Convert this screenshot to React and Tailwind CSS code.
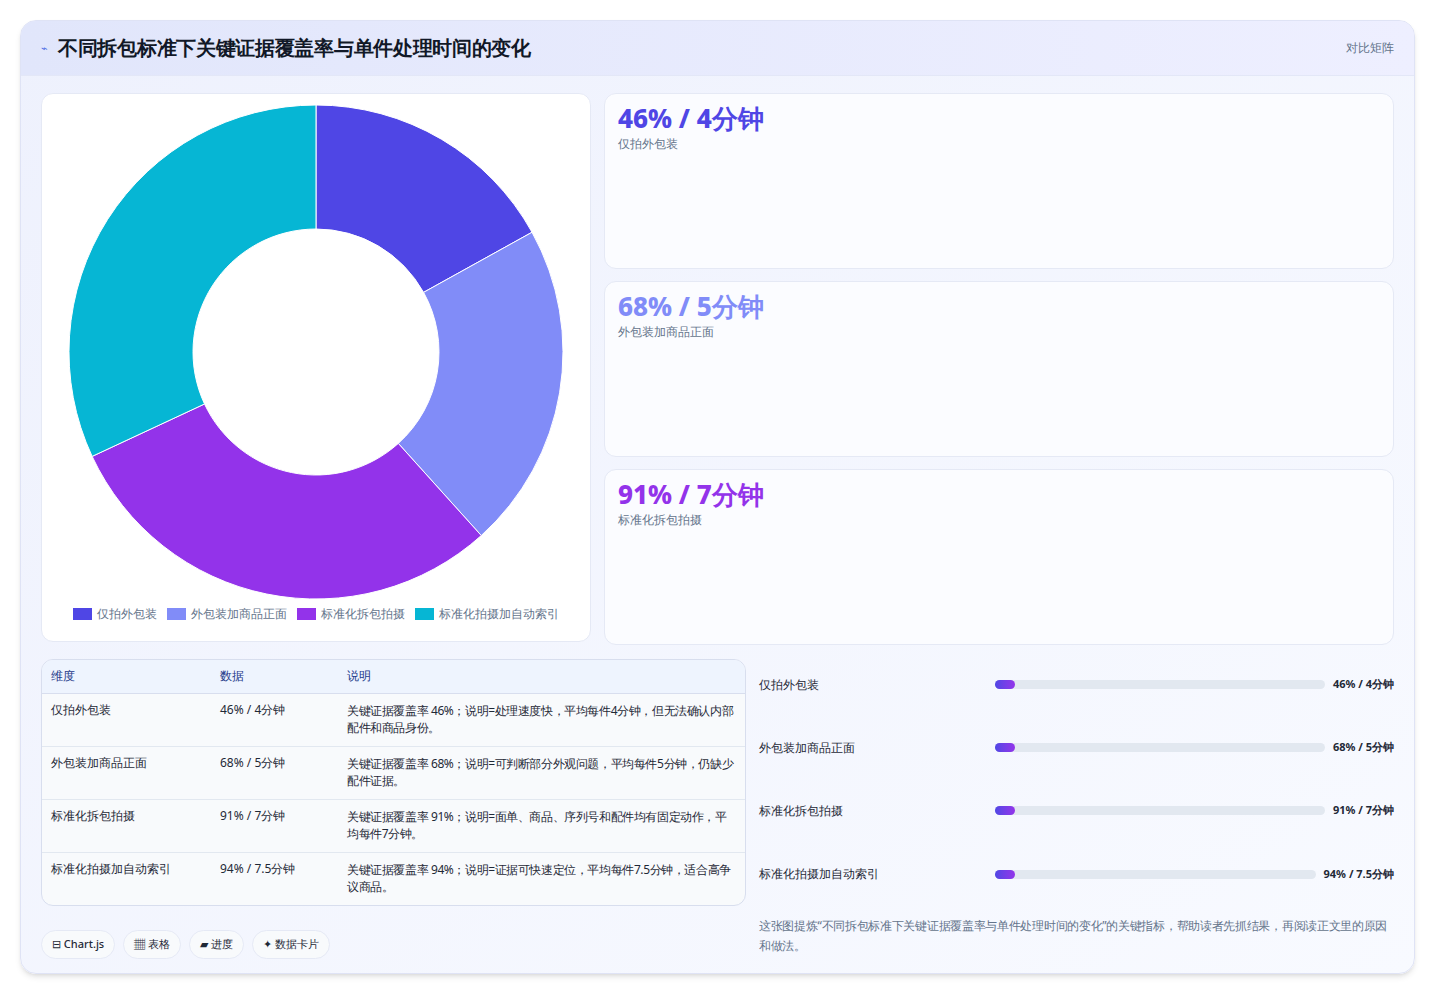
import React from 'react';

const rows = [
  { name: '仅拍外包装', value: '46% / 4分钟', note: '关键证据覆盖率 46%；说明=处理速度快，平均每件4分钟，但无法确认内部配件和商品身份。', color: '#4f46e5', end: 61 },
  { name: '外包装加商品正面', value: '68% / 5分钟', note: '关键证据覆盖率 68%；说明=可判断部分外观问题，平均每件5分钟，仍缺少配件证据。', color: '#818cf8', end: 138 },
  { name: '标准化拆包拍摄', value: '91% / 7分钟', note: '关键证据覆盖率 91%；说明=面单、商品、序列号和配件均有固定动作，平均每件7分钟。', color: '#9333ea', end: 245 },
  { name: '标准化拍摄加自动索引', value: '94% / 7.5分钟', note: '关键证据覆盖率 94%；说明=证据可快速定位，平均每件7.5分钟，适合高争议商品。', color: '#06b6d4', end: 360 },
];

const Donut = () => {
  const cx = 250, cy = 250, R = 247, r = 123;
  let start = 0;
  const pt = (deg, rad) => {
    const a = (deg * Math.PI) / 180;
    return [cx + rad * Math.sin(a), cy - rad * Math.cos(a)];
  };
  return (
    <svg width="500" height="500" viewBox="0 0 500 500">
      {rows.map((row) => {
        const a0 = start;
        const a1 = row.end;
        start = a1;
        const large = a1 - a0 > 180 ? 1 : 0;
        const [x0, y0] = pt(a0, R);
        const [x1, y1] = pt(a1 - 0.001, R);
        const [x2, y2] = pt(a1 - 0.001, r);
        const [x3, y3] = pt(a0, r);
        return (
          <path
            key={row.name}
            d={`M${x0} ${y0} A${R} ${R} 0 ${large} 1 ${x1} ${y1} L${x2} ${y2} A${r} ${r} 0 ${large} 0 ${x3} ${y3} Z`}
            fill={row.color}
            stroke="#fff"
            strokeWidth="1"
          />
        );
      })}
    </svg>
  );
};

const App = () => {
  return (
    <div className="min-h-screen bg-white p-5 font-['Noto_Sans_CJK_SC','Noto_Sans',sans-serif]">
      <div className="rounded-2xl border border-[#dfe3f5] bg-gradient-to-br from-[#eef1fd] to-[#f8faff] shadow-md overflow-hidden">
        {/* header */}
        <div className="flex h-[55px] items-center justify-between border-b border-[#e3e7f7] bg-gradient-to-r from-[#e1e6fb] to-[#eeefff] px-5">
          <div className="flex items-center gap-[10px]">
            <span className="text-[11px] text-[#4f6ee5]">⌁</span>
            <h1 className="text-[20px] font-bold tracking-[-0.3px] text-[#111827]">不同拆包标准下关键证据覆盖率与单件处理时间的变化</h1>
          </div>
          <span className="text-xs text-[#64748b]">对比矩阵</span>
        </div>

        <div className="px-5 pt-[17px] pb-[14px]">
          <div className="flex gap-[13px]">
            <div className="flex h-[549px] w-[550px] shrink-0 flex-col items-center rounded-xl border border-[#e5e9f5] bg-white pt-[8px]">
              <Donut />
              <div className="mt-[4px] flex items-center gap-[10px] text-xs text-[#64748b]">
                {rows.map((r) => (
                  <span key={r.name} className="flex items-center gap-[5px]">
                    <span className="inline-block h-3 w-[19px]" style={{ background: r.color }} />
                    {r.name}
                  </span>
                ))}
              </div>
            </div>
            <div className="flex flex-1 flex-col gap-3">
              {rows.slice(0, 3).map((r) => (
                <div key={r.name} className="h-[176px] rounded-xl border border-[#e5e9f5] bg-[#fbfcff] px-[13px] pt-[6px]">
                  <div className="text-[26px] font-extrabold leading-[36px]" style={{ color: r.color }}>{r.value}</div>
                  <div className="text-xs text-[#64748b]">{r.name}</div>
                </div>
              ))}
            </div>
          </div>

          <div className="mt-[14px] flex gap-[13px]">
            <div className="w-[705px] shrink-0">
              <div className="overflow-hidden rounded-xl border border-[#d8deee] bg-[#f8fafc]">
                <table className="w-full text-left text-xs text-[#1f2937]">
                  <thead>
                    <tr className="h-[33px] border-b border-[#d8deee] bg-[#eef4fe] text-[#1e3a8a]">
                      <th className="w-[178px] pl-[9px] font-medium">维度</th>
                      <th className="w-[127px] font-medium">数据</th>
                      <th className="font-medium">说明</th>
                    </tr>
                  </thead>
                  <tbody>
                    {rows.map((r, i) => (
                      <tr key={r.name} className={`h-[53px] align-top ${i < 3 ? 'border-b border-[#e2e8f0]' : ''}`}>
                        <td className="pl-[9px] pt-[8px]">{r.name}</td>
                        <td className="pt-[8px]">{r.value}</td>
                        <td className="pt-[8px] pb-[6px] pr-[10px] leading-[17px] tracking-[-0.4px]">{r.note}</td>
                      </tr>
                    ))}
                  </tbody>
                </table>
              </div>
              <div className="mt-[24px] flex gap-2 text-[11px] text-[#1f2937]">
                {['⊟ Chart.js', '▦ 表格', '▰ 进度', '✦ 数据卡片'].map((c) => (
                  <span key={c} className="rounded-full border border-[#e5e9f5] bg-[#f8fafc] px-[10px] py-[5px] font-medium">{c}</span>
                ))}
              </div>
            </div>

            <div className="flex flex-1 flex-col pt-[12px]">
              {rows.map((r, i) => (
                <div key={r.name} className={`flex items-center ${i < 3 ? 'h-[63px]' : 'h-[64px]'} pb-[36px]`}>
                  <span className="w-[236px] text-xs text-[#1f2937]">{r.name}</span>
                  <div className="h-[9px] flex-1 rounded-full bg-[#e2e8f0]">
                    <div className="h-[9px] w-[20px] rounded-full bg-gradient-to-r from-[#4f46e5] to-[#9333ea]" />
                  </div>
                  <span className="ml-2 text-[11px] font-bold text-[#1f2937]">{r.value}</span>
                </div>
              ))}
              <p className="mt-[-8px] text-xs leading-[20px] tracking-[-0.3px] text-[#64748b]">
                这张图提炼“不同拆包标准下关键证据覆盖率与单件处理时间的变化”的关键指标，帮助读者先抓结果，再阅读正文里的原因和做法。
              </p>
            </div>
          </div>
        </div>
      </div>
    </div>
  );
};

export default App;
